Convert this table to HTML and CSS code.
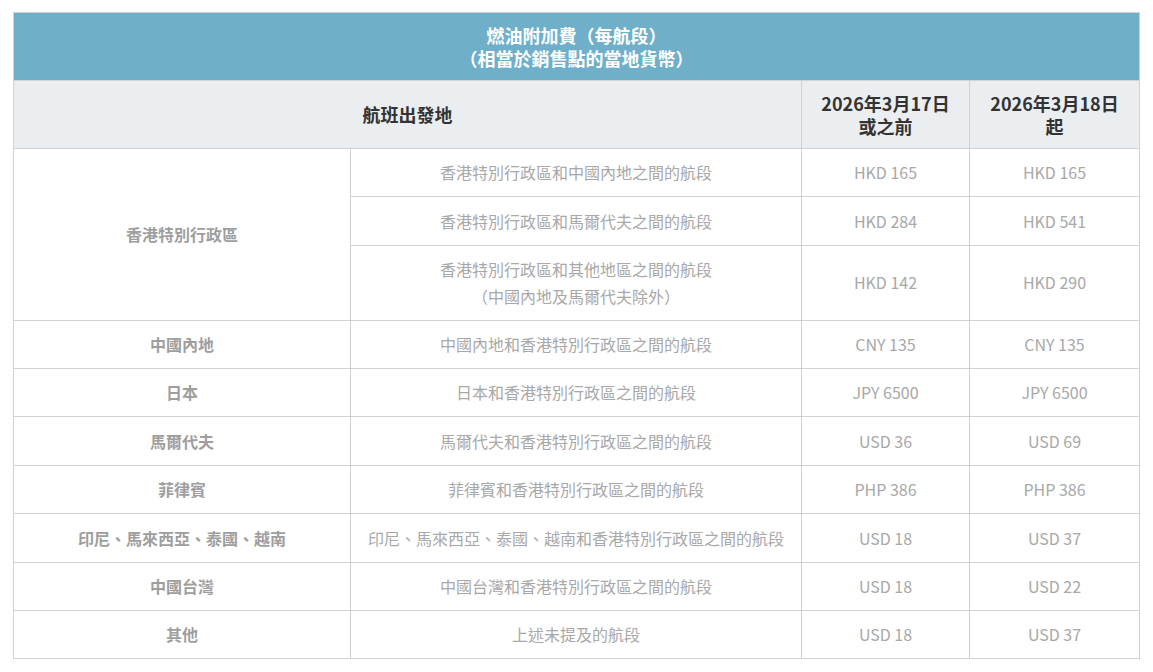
FILE: index.html
```html
<!DOCTYPE html>
<html lang="zh-Hant">
<head>
<meta charset="utf-8">
<link rel="stylesheet" href="styles.css">
</head>
<body>
<table class="fuel">
  <colgroup>
    <col class="c1"><col class="c2"><col class="c3"><col class="c4">
  </colgroup>
  <thead>
    <tr class="title-row"><th colspan="4"><span class="ln">燃油附加費（每航段）</span><span class="ln">（相當於銷售點的當地貨幣）</span></th></tr>
    <tr class="head-row">
      <th colspan="2">航班出發地</th>
      <th><span class="ln">2026年3月17日</span><span class="ln">或之前</span></th>
      <th><span class="ln">2026年3月18日</span><span class="ln">起</span></th>
    </tr>
  </thead>
  <tbody>
    <tr><td class="origin" rowspan="3">香港特別行政區</td><td>香港特別行政區和中國內地之間的航段</td><td>HKD 165</td><td>HKD 165</td></tr>
    <tr><td>香港特別行政區和馬爾代夫之間的航段</td><td>HKD 284</td><td>HKD 541</td></tr>
    <tr><td>香港特別行政區和其他地區之間的航段<br>（中國內地及馬爾代夫除外）</td><td>HKD 142</td><td>HKD 290</td></tr>
    <tr><td class="origin">中國內地</td><td>中國內地和香港特別行政區之間的航段</td><td>CNY 135</td><td>CNY 135</td></tr>
    <tr><td class="origin">日本</td><td>日本和香港特別行政區之間的航段</td><td>JPY 6500</td><td>JPY 6500</td></tr>
    <tr><td class="origin">馬爾代夫</td><td>馬爾代夫和香港特別行政區之間的航段</td><td>USD 36</td><td>USD 69</td></tr>
    <tr><td class="origin">菲律賓</td><td>菲律賓和香港特別行政區之間的航段</td><td>PHP 386</td><td>PHP 386</td></tr>
    <tr><td class="origin">印尼、馬來西亞、泰國、越南</td><td>印尼、馬來西亞、泰國、越南和香港特別行政區之間的航段</td><td>USD 18</td><td>USD 37</td></tr>
    <tr><td class="origin">中國台灣</td><td>中國台灣和香港特別行政區之間的航段</td><td>USD 18</td><td>USD 22</td></tr>
    <tr><td class="origin">其他</td><td>上述未提及的航段</td><td>USD 18</td><td>USD 37</td></tr>
  </tbody>
</table>
</body>
</html>
```

FILE: styles.css
```css
html, body {
  margin: 0;
  background: #ffffff;
}
body {
  padding: 12px 0 0 13px;
  font-family: "Noto Sans CJK TC", "Noto Sans", sans-serif;
  font-size: 16px;
}
.fuel {
  width: 1126px;
  border-collapse: collapse;
  table-layout: fixed;
  border: 1px solid #d2d2d2;
}
.c1 { width: 337px; }
.c2 { width: 451px; }
.c3 { width: 168px; }
.c4 { width: 170px; }
.fuel th, .fuel td {
  border: 1px solid #d2d2d2;
  text-align: center;
  vertical-align: middle;
}
.ln {
  display: block;
  height: 23px;
  line-height: 23px;
}
.title-row th {
  background: #6fafc9;
  color: #ffffff;
  font-size: 18px;
  font-weight: 700;
  line-height: 23px;
  height: 67px;
  padding: 0 10px;
}
.head-row th {
  background: #ebeef1;
  color: #333333;
  font-size: 18px;
  font-weight: 700;
  line-height: 23px;
  height: 67px;
  padding: 0 10px;
}
.fuel td {
  color: #a8a8a8;
  line-height: 26.5px;
  padding: 10.45px 8px;
}
.fuel td.origin {
  font-weight: 700;
  color: #9e9e9e;
}
```
